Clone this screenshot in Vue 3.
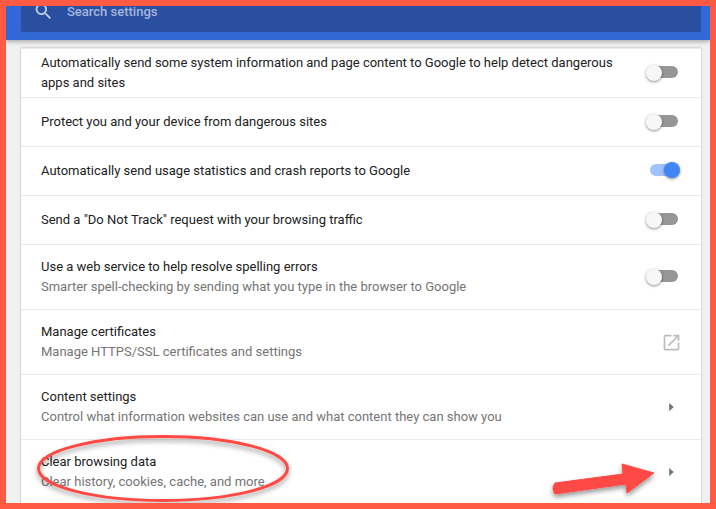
<script setup>
const rows = [
  { title: "Automatically send some system information and page content to Google to help detect dangerous apps and sites", type: "toggle" },
  { title: "Protect you and your device from dangerous sites", type: "toggle" },
  { title: "Automatically send usage statistics and crash reports to Google", type: "toggle", on: true },
  { title: 'Send a "Do Not Track" request with your browsing traffic', type: "toggle" },
  { title: "Use a web service to help resolve spelling errors", sub: "Smarter spell-checking by sending what you type in the browser to Google", type: "toggle" },
  { title: "Manage certificates", sub: "Manage HTTPS/SSL certificates and settings", type: "external" },
  { title: "Content settings", sub: "Control what information websites can use and what content they can show you", type: "arrow" },
  { title: "Clear browsing data", sub: "Clear history, cookies, cache, and more", type: "arrow" },
];
</script>

<template>
  <div class="frame">
    <header class="toolbar">
      <div class="search">
        <svg class="search-icon" width="21" height="21" viewBox="0 0 24 24">
          <path fill="currentColor" d="M15.5 14h-.79l-.28-.27A6.47 6.47 0 0 0 16 9.5 6.5 6.5 0 1 0 9.5 16c1.61 0 3.09-.59 4.23-1.57l.27.28v.79l5 4.99L20.49 19l-4.99-5zm-6 0C7.01 14 5 11.99 5 9.5S7.01 5 9.5 5 14 7.01 14 9.5 11.99 14 9.5 14z" />
        </svg>
        <span>Search settings</span>
      </div>
    </header>

    <main class="page">
      <section class="card">
        <div v-for="row in rows" :key="row.title" class="row">
          <div class="text">
            <div>{{ row.title }}</div>
            <div v-if="row.sub" class="sub">{{ row.sub }}</div>
          </div>
          <div v-if="row.type === 'toggle'" class="toggle" :class="{ on: row.on }">
            <span class="bar"></span>
            <span class="knob"></span>
          </div>
          <svg v-else-if="row.type === 'external'" class="external" width="21" height="21" viewBox="0 0 24 24">
            <path fill="currentColor" d="M19 19H5V5h7V3H5a2 2 0 0 0-2 2v14a2 2 0 0 0 2 2h14c1.1 0 2-.9 2-2v-7h-2v7zM14 3v2h3.59l-9.83 9.83 1.41 1.41L19 6.41V10h2V3h-7z" />
          </svg>
          <svg v-else class="arrow" width="22" height="22" viewBox="0 0 24 24">
            <path fill="currentColor" d="M10 7.500l5 4.500-5 4.500z" />
          </svg>
        </div>
      </section>
    </main>

    <svg class="marks" width="704" height="497" viewBox="0 0 704 497">
      <defs>
        <filter id="drop" x="-20%" y="-30%" width="140%" height="170%">
          <feDropShadow dx="0" dy="3" stdDeviation="2.5" flood-color="#000" flood-opacity="0.4" />
        </filter>
      </defs>
      <ellipse cx="157" cy="462.500" rx="124.500" ry="32" fill="none" stroke="#ff4a45" stroke-width="3" filter="url(#drop)" />
      <path d="M549 477 Q545 482 549 488 L620 478 L621 487 L648 467 L616 458 L617 468 Z" fill="#ff4a45" stroke="#ff4a45" stroke-width="1" stroke-linejoin="round" filter="url(#drop)" />
    </svg>
  </div>
</template>

<style scoped>
.frame {
  position: relative;
  width: 716px;
  height: 509px;
  box-sizing: border-box;
  border: 6px solid #ff5a43;
  overflow: hidden;
  background: #f1f1f1;
  font-family: Roboto, "Liberation Sans", sans-serif;
  font-size: 13px;
  color: #212121;
}

.toolbar {
  position: relative;
  z-index: 1;
  height: 34px;
  padding: 0 9px 0 15px;
  background: #3367d6;
  box-shadow: 0 2px 4px rgba(0, 0, 0, 0.28);
  box-sizing: border-box;
}

.search {
  display: flex;
  align-items: center;
  gap: 13px;
  height: 26px;
  padding: 0 0 16px 12px;
  box-sizing: border-box;
  border-radius: 0 0 2px 2px;
  background: #2a4fa1;
  color: #a5b6dd;
  font-weight: 500;
}

.search-icon {
  flex: none;
  color: #c4d0ea;
}

.page {
  padding: 8px 9px 0 15px;
}

.card {
  background: #fff;
  box-shadow: 0 0 2px rgba(0, 0, 0, 0.3);
  border-top: 1px solid #ebebeb;
}

.row {
  display: flex;
  align-items: center;
  justify-content: space-between;
  height: 49px;
  padding: 0 20px;
  box-sizing: border-box;
  border-bottom: 1px solid #ebebeb;
}

.row:has(.sub) {
  height: 65px;
}

.text {
  flex: 1;
  min-width: 0;
  max-width: 590px;
  line-height: 20px;
}

.sub {
  color: #757575;
}

.toggle {
  position: relative;
  flex: none;
  width: 34px;
  height: 20px;
  margin-right: 2px;
}

.bar {
  position: absolute;
  top: 3px;
  left: 5px;
  width: 28px;
  height: 12px;
  border-radius: 6px;
  background: #969696;
}

.knob {
  position: absolute;
  top: 2px;
  left: 1px;
  width: 16px;
  height: 16px;
  border-radius: 50%;
  background: #f7f7f7;
  box-shadow: 0 1px 3px rgba(0, 0, 0, 0.45);
}

.toggle.on .bar {
  background: #a1c2fa;
}

.toggle.on .knob {
  top: 1px;
  left: 19px;
  background: #4285f4;
}

.external {
  flex: none;
  margin-right: -1px;
  color: #bdbdbd;
}

.arrow {
  flex: none;
  margin-right: -1px;
  color: #757575;
}

.marks {
  position: absolute;
  top: 0;
  left: 0;
  z-index: 2;
  pointer-events: none;
}
</style>

<style>
body {
  margin: 0;
}
</style>
